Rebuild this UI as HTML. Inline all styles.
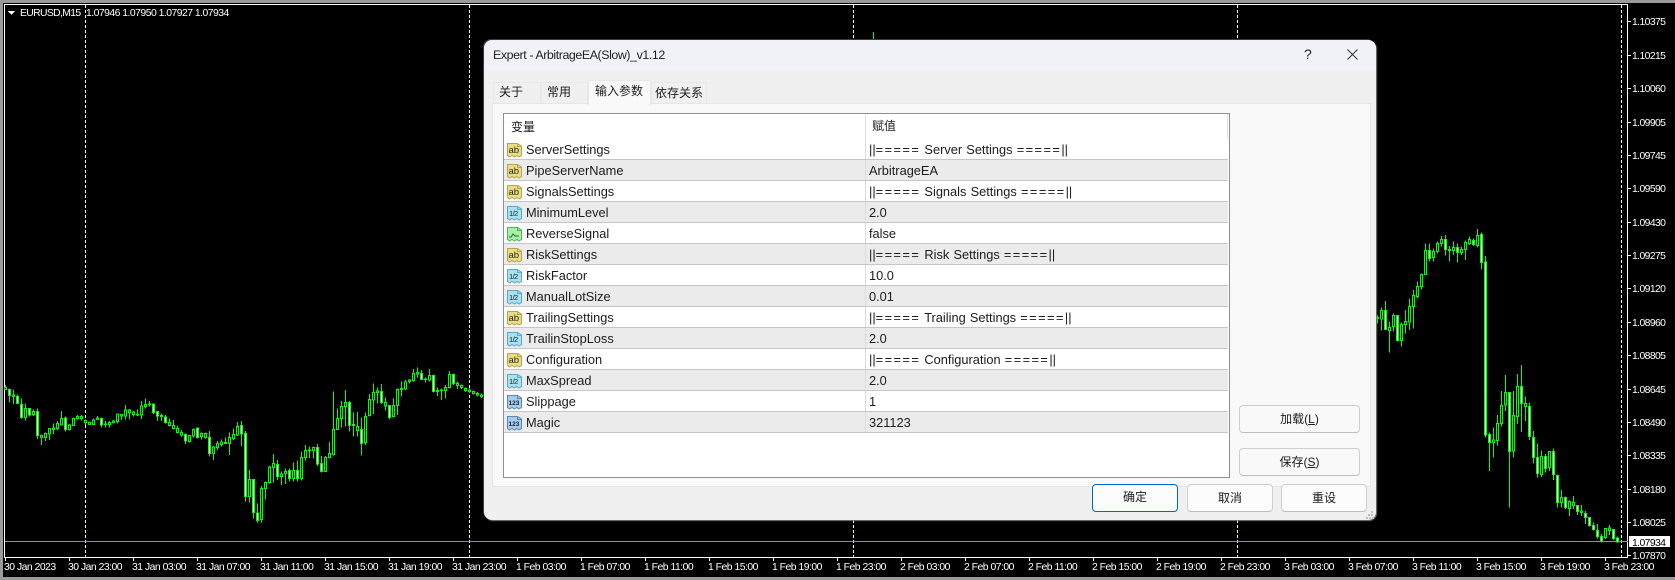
<!DOCTYPE html>
<html>
<head>
<meta charset="utf-8">
<style>
html,body{margin:0;padding:0;background:#000;width:1675px;height:580px;overflow:hidden}
body{position:relative;font-family:"Liberation Sans","Noto Sans CJK SC",sans-serif}
svg.c{position:absolute;left:0;top:0}
svg.c text{font-family:"Liberation Sans",sans-serif;font-size:10.4px;letter-spacing:-.5px;fill:#fff}
svg.c .p text{letter-spacing:-.6px}
.a{position:absolute}
#dlg{position:absolute;left:484px;top:40px;width:892px;height:480px;background:#f0f0f0;border-radius:8px;overflow:hidden;box-shadow:1px 1px 1px #777,-1px -1px 0 #3a3a3a}
#tb{position:absolute;left:0;top:0;right:0;height:30px;background:#f1f2f7}
.l{position:absolute;height:16px;line-height:16px;white-space:nowrap;color:#1c1c1c;font-size:12px}
.tab{position:absolute;background:#f0f0f0;border:1px solid #e8e8e8;border-bottom:none;box-sizing:border-box}
#panel{position:absolute;left:492px;top:103px;width:879px;height:384px;background:#f9f9f9;border:1px solid #e6e6e6;box-sizing:border-box}
#tbl{position:absolute;left:503px;top:113px;width:727px;height:365px;background:#fff;border:1px solid #8e8e96;box-sizing:border-box}
.r{position:absolute;left:504px;width:724px;height:21px;box-sizing:border-box;border-bottom:1px solid #c6c6c6;background:#fff}
.g{background:#ebebeb}
.n,.v{position:absolute;top:2px;height:18px;line-height:18px;font-size:12.8px;color:#1c1c1c;white-space:nowrap}
.n{left:22px}
.v{left:365px;word-spacing:.6px}
.v i{font-style:normal;letter-spacing:1.45px}
.r svg{position:absolute;left:2px;top:4px}
.d{position:absolute;left:361px;top:0;width:1px;height:20px;background:#dcdcdc}
.b{position:absolute;box-sizing:border-box;border:1px solid #cfcfcf;border-bottom-color:#bdbdbd;border-radius:4px;background:#fcfcfc;text-align:center;font-size:12px;color:#1c1c1c;line-height:26px;height:28px}
.s{background:#f9f9f9}
.ab{font-size:9.5px;font-family:"Liberation Sans",sans-serif;fill:#2a2a10}
.hf{font-size:7.5px;letter-spacing:-.6px;font-family:"Liberation Sans",sans-serif;fill:#123}
.nm{font-size:6.5px;font-weight:bold;font-family:"Liberation Sans",sans-serif;fill:#123}
</style>
</head>
<body>
<svg class="c" width="1675" height="580" viewBox="0 0 1675 580" shape-rendering="crispEdges">
<rect x="0" y="0" width="1675" height="3" fill="#9a9a9a"/>
<rect x="0" y="0" width="3" height="580" fill="#9a9a9a"/>
<rect x="0" y="577" width="1675" height="3" fill="#9a9a9a"/>
<rect x="4" y="4" width="1624" height="1" fill="#fff"/>
<rect x="4" y="4" width="1" height="554" fill="#fff"/>
<rect x="1627" y="4" width="1" height="554" fill="#fff"/>
<rect x="4" y="557" width="1624" height="1" fill="#fff"/>
<g stroke="#fff" stroke-dasharray="3 2">
<path d="M85.5 5V557M469.5 5V557M853.5 5V557M1237.5 5V557M1621.5 5V557"/>
</g>
<path d="M5 541.5H1628" stroke="#8a8f99"/>
<path d="M873.5 32V42" stroke="#0f0"/>

<g transform="translate(0,340) scale(.33333)" stroke="#0f0" stroke-width="3">
<path fill="none" d="M16.5 135V150M28.5 145V188M40.5 148V192M52.5 163V192M64.5 175V237M76.5 190V242M88.5 205V230M100.5 208V228M112.5 205V297M124.5 283V315M136.5 278V303M148.5 265V300M160.5 250V282M172.5 243V270M184.5 213V255M196.5 230V275M208.5 252V272M220.5 232V258M232.5 225V238M244.5 225V242M256.5 238V255M268.5 245V255M280.5 235V255M292.5 228V240M304.5 233V263M316.5 243V262M328.5 243V262M340.5 240V250M352.5 222V250M364.5 222V240M376.5 195V238M388.5 207V238M400.5 213V230M412.5 208V228M424.5 183V237M436.5 175V205M448.5 183V200M460.5 190V222M472.5 213V243M484.5 220V243M496.5 225V250M508.5 235V260M520.5 240V268M532.5 258V280M544.5 270V290M556.5 280V312M568.5 285V308M580.5 265V292M592.5 262V295M604.5 277V298M616.5 278V296M628.5 273V350M640.5 318V360M652.5 303V330M664.5 298V320M676.5 292V312M688.5 278V345M700.5 265V300M712.5 246V288M724.5 243V318M736.5 273V485M748.5 390V487M760.5 417V535M772.5 490V548M784.5 438V548M796.5 425V478M808.5 378V430M820.5 342V427M832.5 360V420M844.5 395V435M856.5 385V432M868.5 385V425M880.5 368V425M892.5 362V425M904.5 335V422M916.5 315V362M928.5 320V354M940.5 320V355M952.5 312V378M964.5 348V398M976.5 348V395M988.5 306V355M1000.5 155V347M1012.5 205V270M1024.5 183V262M1036.5 150V260M1048.5 183V275M1060.5 218V290M1072.5 216V290M1084.5 232V347M1096.5 217V315M1108.5 162V230M1120.5 130V222M1132.5 142V190M1144.5 132V192M1156.5 172V212M1168.5 195V238M1180.5 175V233M1192.5 146V225M1204.5 125V170M1216.5 120V150M1228.5 117V130M1240.5 87V125M1252.5 82V113M1264.5 90V120M1276.5 112V128M1288.5 87V124M1300.5 103V158M1312.5 142V168M1324.5 145V180M1336.5 135V175M1348.5 93V145M1360.5 100V135M1372.5 125V147M1384.5 133V147M1396.5 142V156M1408.5 146V159M1420.5 151V164M1432.5 156V169M1444.5 161V174"/>
<path fill="#000" d="M13.5 142h6v6h-6zM37.5 165h6v5h-6zM73.5 205h6v28h-6zM97.5 214h6v10h-6zM121.5 286h6v6h-6zM133.5 280h6v13h-6zM145.5 265h6v17h-6zM157.5 264h6v4h-6zM169.5 250h6v16h-6zM181.5 235h6v20h-6zM205.5 255h6v13h-6zM217.5 235h6v22h-6zM229.5 229h6v7h-6zM241.5 229h6v7h-6zM253.5 241h6v7h-6zM265.5 247h6v6h-6zM277.5 240h6v13h-6zM289.5 234h6v5h-6zM313.5 252h6v2h-6zM325.5 247h6v7h-6zM337.5 243h6v4h-6zM349.5 222h6v23h-6zM361.5 224h6v4h-6zM373.5 210h6v18h-6zM385.5 210h6v8h-6zM397.5 216h6v8h-6zM409.5 223h6v2h-6zM421.5 198h6v27h-6zM433.5 193h6v7h-6zM445.5 192h6v2h-6zM481.5 226h6v4h-6zM505.5 247h6v10h-6zM517.5 256h6v10h-6zM529.5 265h6v13h-6zM541.5 277h6v8h-6zM565.5 286h6v19h-6zM577.5 268h6v20h-6zM601.5 280h6v10h-6zM613.5 281h6v12h-6zM637.5 321h6v20h-6zM649.5 310h6v13h-6zM661.5 306h6v8h-6zM673.5 307h6v3h-6zM685.5 292h6v19h-6zM697.5 283h6v13h-6zM709.5 259h6v26h-6zM745.5 418h6v52h-6zM781.5 445h6v93h-6zM793.5 427h6v19h-6zM805.5 381h6v47h-6zM817.5 370h6v12h-6zM841.5 402h6v8h-6zM853.5 394h6v7h-6zM877.5 391h6v25h-6zM901.5 352h6v64h-6zM913.5 331h6v22h-6zM925.5 330h6v2h-6zM937.5 323h6v8h-6zM973.5 352h6v42h-6zM985.5 340h6v13h-6zM997.5 268h6v76h-6zM1009.5 235h6v33h-6zM1021.5 199h6v36h-6zM1033.5 187h6v13h-6zM1057.5 253h6v4h-6zM1069.5 260h6v12h-6zM1093.5 229h6v79h-6zM1105.5 178h6v49h-6zM1117.5 157h6v23h-6zM1129.5 153h6v5h-6zM1153.5 187h6v11h-6zM1177.5 196h6v34h-6zM1189.5 148h6v48h-6zM1201.5 145h6v3h-6zM1213.5 126h6v21h-6zM1225.5 120h6v4h-6zM1237.5 100h6v22h-6zM1249.5 97h6v5h-6zM1273.5 117h6v2h-6zM1285.5 106h6v14h-6zM1309.5 152h6v2h-6zM1321.5 150h6v2h-6zM1333.5 142h6v10h-6zM1345.5 103h6v40h-6zM1369.5 130h6v6h-6zM1381.5 137h6v6h-6zM1393.5 146h6v6h-6zM1405.5 150h6v5h-6zM1417.5 155h6v5h-6zM1429.5 160h6v5h-6zM1441.5 165h6v5h-6z"/>
<path fill="#fff" d="M25.5 148h6v18h-6zM49.5 170h6v20h-6zM61.5 193h6v40h-6zM85.5 205h6v20h-6zM109.5 214h6v73h-6zM193.5 234h6v34h-6zM301.5 236h6v19h-6zM457.5 192h6v26h-6zM469.5 214h6v14h-6zM493.5 231h6v17h-6zM553.5 283h6v20h-6zM589.5 264h6v29h-6zM625.5 292h6v49h-6zM721.5 256h6v26h-6zM733.5 280h6v190h-6zM757.5 418h6v100h-6zM769.5 519h6v23h-6zM829.5 373h6v36h-6zM865.5 391h6v25h-6zM889.5 391h6v25h-6zM949.5 322h6v50h-6zM961.5 371h6v23h-6zM1045.5 187h6v70h-6zM1081.5 268h6v43h-6zM1141.5 154h6v34h-6zM1165.5 196h6v37h-6zM1261.5 100h6v18h-6zM1297.5 106h6v49h-6zM1357.5 103h6v28h-6z"/>
</g>

<g transform="translate(1280,200) scale(.33333)" stroke="#0f0" stroke-width="3">
<path fill="none" d="M292.5 345V370M304.5 323V392M316.5 303V390M328.5 366V458M340.5 340V395M352.5 345V425M364.5 368V440M376.5 330V400M388.5 295V390M400.5 270V386M412.5 245V295M424.5 220V268M436.5 130V223M448.5 130V185M460.5 145V185M472.5 125V160M484.5 108V140M496.5 105V167M508.5 138V185M520.5 125V165M532.5 130V188M544.5 140V165M556.5 122V180M568.5 110V135M580.5 115V138M592.5 87V143M604.5 98V208"/>
<path fill="#000" d="M289.5 352h6v3h-6zM301.5 332h6v25h-6zM325.5 382h6v10h-6zM337.5 347h6v33h-6zM361.5 373h6v49h-6zM373.5 364h6v9h-6zM385.5 319h6v47h-6zM397.5 287h6v33h-6zM409.5 260h6v30h-6zM421.5 223h6v37h-6zM433.5 151h6v72h-6zM457.5 154h6v18h-6zM469.5 130h6v25h-6zM481.5 118h6v13h-6zM505.5 148h6v3h-6zM517.5 142h6v9h-6zM541.5 148h6v10h-6zM553.5 127h6v21h-6zM565.5 118h6v13h-6zM589.5 106h6v30h-6z"/>
<path fill="#fff" d="M313.5 332h6v56h-6zM349.5 347h6v75h-6zM445.5 152h6v23h-6zM493.5 118h6v30h-6zM529.5 142h6v16h-6zM577.5 122h6v12h-6zM601.5 103h6v84h-6z"/>
</g>

<g transform="translate(1440,355) scale(.33333)" stroke="#0f0" stroke-width="3">
<path fill="none" d="M136.5 -297V248M148.5 232V348M160.5 217V308M172.5 180V272M184.5 108V215M196.5 60V168M208.5 112V458M220.5 108V308M232.5 57V207M244.5 30V231M256.5 124V198M268.5 142V255M280.5 228V325M292.5 265V368M304.5 286V366M316.5 297V352M328.5 288V348M340.5 280V375M352.5 358V458M364.5 405V458M376.5 424V462M388.5 437V483M400.5 423V462M412.5 450V480M424.5 450V483M436.5 468V507M448.5 486V515M460.5 502V527M472.5 507V550M484.5 537V562M496.5 520V552M508.5 510V540M520.5 522V555M532.5 545V563"/>
<path fill="#000" d="M157.5 255h6v8h-6zM169.5 205h6v52h-6zM181.5 151h6v54h-6zM193.5 112h6v38h-6zM217.5 181h6v107h-6zM229.5 94h6v91h-6zM253.5 145h6v10h-6zM301.5 304h6v55h-6zM325.5 290h6v48h-6zM361.5 427h6v16h-6zM385.5 439h6v21h-6zM397.5 442h6v10h-6zM421.5 468h6v5h-6zM493.5 520h6v28h-6zM505.5 519h6v8h-6z"/>
<path fill="#fff" d="M133.5 -279h6v519h-6zM145.5 238h6v25h-6zM205.5 112h6v178h-6zM241.5 94h6v52h-6zM265.5 154h6v91h-6zM277.5 247h6v61h-6zM289.5 307h6v49h-6zM313.5 304h6v36h-6zM337.5 290h6v68h-6zM349.5 361h6v82h-6zM373.5 428h6v30h-6zM409.5 451h6v19h-6zM433.5 475h6v13h-6zM445.5 488h6v24h-6zM457.5 511h6v13h-6zM469.5 526h6v19h-6zM481.5 544h6v16h-6zM517.5 523h6v28h-6zM529.5 549h6v12h-6z"/>
</g>

<path stroke="#fff" fill="none" d="M1628 21.5h3M1628 55.5h3M1628 88.5h3M1628 122.5h3M1628 155.5h3M1628 188.5h3M1628 222.5h3M1628 255.5h3M1628 288.5h3M1628 322.5h3M1628 355.5h3M1628 389.5h3M1628 422.5h3M1628 455.5h3M1628 489.5h3M1628 522.5h3M1628 555.5h3"/>
<path stroke="#fff" fill="none" d="M5.5 558v3M69.5 558v3M133.5 558v3M197.5 558v3M261.5 558v3M325.5 558v3M389.5 558v3M453.5 558v3M517.5 558v3M581.5 558v3M645.5 558v3M709.5 558v3M773.5 558v3M837.5 558v3M901.5 558v3M965.5 558v3M1029.5 558v3M1093.5 558v3M1157.5 558v3M1221.5 558v3M1285.5 558v3M1349.5 558v3M1413.5 558v3M1477.5 558v3M1541.5 558v3M1605.5 558v3"/>
<path fill="#fff" d="M8 11h7l-3.5 4z"/>
<rect x="1629" y="536" width="41" height="11" fill="#fff"/>
<g shape-rendering="auto">
<text x="20" y="16" style="letter-spacing:-.65px">EURUSD,M15</text>
<text x="86" y="16" style="letter-spacing:-.52px">1.07946 1.07950 1.07927 1.07934</text>
<g class="p">
<text x="1632" y="25">1.10375</text><text x="1632" y="59">1.10215</text><text x="1632" y="92">1.10060</text><text x="1632" y="126">1.09905</text><text x="1632" y="159">1.09745</text><text x="1632" y="192">1.09590</text><text x="1632" y="226">1.09430</text><text x="1632" y="259">1.09275</text><text x="1632" y="292">1.09120</text><text x="1632" y="326">1.08960</text><text x="1632" y="359">1.08805</text><text x="1632" y="393">1.08645</text><text x="1632" y="426">1.08490</text><text x="1632" y="459">1.08335</text><text x="1632" y="493">1.08180</text><text x="1632" y="526">1.08025</text><text x="1632" y="559">1.07870</text>
<text x="1632" y="546" style="fill:#000">1.07934</text>
</g>
<g>
<text x="4" y="570">30 Jan 2023</text><text x="68" y="570">30 Jan 23:00</text><text x="132" y="570">31 Jan 03:00</text><text x="196" y="570">31 Jan 07:00</text><text x="260" y="570">31 Jan 11:00</text><text x="324" y="570">31 Jan 15:00</text><text x="388" y="570">31 Jan 19:00</text><text x="452" y="570">31 Jan 23:00</text><text x="516" y="570">1 Feb 03:00</text><text x="580" y="570">1 Feb 07:00</text><text x="644" y="570">1 Feb 11:00</text><text x="708" y="570">1 Feb 15:00</text><text x="772" y="570">1 Feb 19:00</text><text x="836" y="570">1 Feb 23:00</text><text x="900" y="570">2 Feb 03:00</text><text x="964" y="570">2 Feb 07:00</text><text x="1028" y="570">2 Feb 11:00</text><text x="1092" y="570">2 Feb 15:00</text><text x="1156" y="570">2 Feb 19:00</text><text x="1220" y="570">2 Feb 23:00</text><text x="1284" y="570">3 Feb 03:00</text><text x="1348" y="570">3 Feb 07:00</text><text x="1412" y="570">3 Feb 11:00</text><text x="1476" y="570">3 Feb 15:00</text><text x="1540" y="570">3 Feb 19:00</text><text x="1604" y="570">3 Feb 23:00</text>
</g>
</g>
</svg>

<svg width="0" height="0" style="position:absolute">
<symbol id="ic" viewBox="0 0 16 15"><path d="M1.5.5H11.5L15.5 3V12.5L13 14 11 12.5 8.5 14 6 12.5 3.5 14 1.5 12.5Z" stroke-width="1"/><path d="M11.5.5V3.5H15.5" fill="none" stroke-width="1"/></symbol>
</svg>

<div id="dlg"><div id="tb"></div></div>
<div class="l" style="left:493px;top:47px;font-size:12.4px;letter-spacing:-.42px;color:#222">Expert - ArbitrageEA(Slow)_v1.12</div>
<div class="l" style="left:1304px;top:46px;font-size:14px;color:#222">?</div>
<svg class="a" style="left:1347px;top:49px" width="11" height="11"><path d="M.5.5L10.5 10.5M10.5.5L.5 10.5" stroke="#333" fill="none"/></svg>

<div class="tab" style="left:493px;top:82px;width:48px;height:22px"></div>
<div class="tab" style="left:541px;top:82px;width:47px;height:22px"></div>
<div class="tab" style="left:651px;top:82px;width:56px;height:22px"></div>
<div id="panel"></div>
<div class="tab" style="left:588px;top:80px;width:63px;height:25px;background:#f9f9f9"></div>
<div class="l" style="left:499px;top:84px">关于</div>
<div class="l" style="left:547px;top:84px">常用</div>
<div class="l" style="left:595px;top:83px">输入参数</div>
<div class="l" style="left:655px;top:85px">依存关系</div>

<div id="tbl"></div>
<div class="l" style="left:511px;top:119px">变量</div>
<div class="l" style="left:872px;top:118px">赋值</div>
<div class="a" style="left:865px;top:114px;width:1px;height:25px;background:#e0e0e0"></div>
<div class="a" style="left:1227px;top:114px;width:1px;height:25px;background:#e0e0e0"></div>

<div class="r" style="top:139px"><svg width="16" height="15"><use href="#ic" fill="#e9dd8a" stroke="#b3a651"/><text x="2.5" y="10" class="ab">ab</text></svg><div class="n">ServerSettings</div><div class="d"></div><div class="v">||<i>=====</i> Server Settings <i>=====</i>||</div></div>
<div class="r g" style="top:160px"><svg width="16" height="15"><use href="#ic" fill="#e9dd8a" stroke="#b3a651"/><text x="2.5" y="10" class="ab">ab</text></svg><div class="n">PipeServerName</div><div class="d"></div><div class="v">ArbitrageEA</div></div>
<div class="r" style="top:181px"><svg width="16" height="15"><use href="#ic" fill="#e9dd8a" stroke="#b3a651"/><text x="2.5" y="10" class="ab">ab</text></svg><div class="n">SignalsSettings</div><div class="d"></div><div class="v">||<i>=====</i> Signals Settings <i>=====</i>||</div></div>
<div class="r g" style="top:202px"><svg width="16" height="15"><use href="#ic" fill="#a8e2ef" stroke="#5aa9c6"/><text x="3" y="10" class="hf">1/2</text></svg><div class="n">MinimumLevel</div><div class="d"></div><div class="v">2.0</div></div>
<div class="r" style="top:223px"><svg width="16" height="15"><use href="#ic" fill="#a5f0a5" stroke="#4fb35a"/><path d="M3 10h2l2-3 2 2h4" fill="none" stroke="#1c6b2c"/></svg><div class="n">ReverseSignal</div><div class="d"></div><div class="v">false</div></div>
<div class="r g" style="top:244px"><svg width="16" height="15"><use href="#ic" fill="#e9dd8a" stroke="#b3a651"/><text x="2.5" y="10" class="ab">ab</text></svg><div class="n">RiskSettings</div><div class="d"></div><div class="v">||<i>=====</i> Risk Settings <i>=====</i>||</div></div>
<div class="r" style="top:265px"><svg width="16" height="15"><use href="#ic" fill="#a8e2ef" stroke="#5aa9c6"/><text x="3" y="10" class="hf">1/2</text></svg><div class="n">RiskFactor</div><div class="d"></div><div class="v">10.0</div></div>
<div class="r g" style="top:286px"><svg width="16" height="15"><use href="#ic" fill="#a8e2ef" stroke="#5aa9c6"/><text x="3" y="10" class="hf">1/2</text></svg><div class="n">ManualLotSize</div><div class="d"></div><div class="v">0.01</div></div>
<div class="r" style="top:307px"><svg width="16" height="15"><use href="#ic" fill="#e9dd8a" stroke="#b3a651"/><text x="2.5" y="10" class="ab">ab</text></svg><div class="n">TrailingSettings</div><div class="d"></div><div class="v">||<i>=====</i> Trailing Settings <i>=====</i>||</div></div>
<div class="r g" style="top:328px"><svg width="16" height="15"><use href="#ic" fill="#a8e2ef" stroke="#5aa9c6"/><text x="3" y="10" class="hf">1/2</text></svg><div class="n">TrailinStopLoss</div><div class="d"></div><div class="v">2.0</div></div>
<div class="r" style="top:349px"><svg width="16" height="15"><use href="#ic" fill="#e9dd8a" stroke="#b3a651"/><text x="2.5" y="10" class="ab">ab</text></svg><div class="n">Configuration</div><div class="d"></div><div class="v">||<i>=====</i> Configuration <i>=====</i>||</div></div>
<div class="r g" style="top:370px"><svg width="16" height="15"><use href="#ic" fill="#a8e2ef" stroke="#5aa9c6"/><text x="3" y="10" class="hf">1/2</text></svg><div class="n">MaxSpread</div><div class="d"></div><div class="v">2.0</div></div>
<div class="r" style="top:391px"><svg width="16" height="15"><use href="#ic" fill="#a9cbee" stroke="#5a86b5"/><text x="2.5" y="10" class="nm">123</text></svg><div class="n">Slippage</div><div class="d"></div><div class="v">1</div></div>
<div class="r g" style="top:412px"><svg width="16" height="15"><use href="#ic" fill="#a9cbee" stroke="#5a86b5"/><text x="2.5" y="10" class="nm">123</text></svg><div class="n">Magic</div><div class="d"></div><div class="v">321123</div></div>

<div class="b s" style="left:1239px;top:405px;width:121px">加载(<u>L</u>)</div>
<div class="b s" style="left:1239px;top:448px;width:121px">保存(<u>S</u>)</div>
<div class="b" style="left:1092px;top:484px;width:86px;border:1.5px solid #0067c0;line-height:25px">确定</div>
<div class="b" style="left:1187px;top:484px;width:86px">取消</div>
<div class="b" style="left:1281px;top:484px;width:86px">重设</div>
<svg class="a" style="left:1366px;top:511px" width="8" height="8"><path fill="#bdbdbd" d="M5 0h2v2H5zM2 3h2v2H2zM5 3h2v2H5zM0 6h2v2H0zM3 6h2v2H3zM6 6h2v2H6z"/></svg>
</body>
</html>
